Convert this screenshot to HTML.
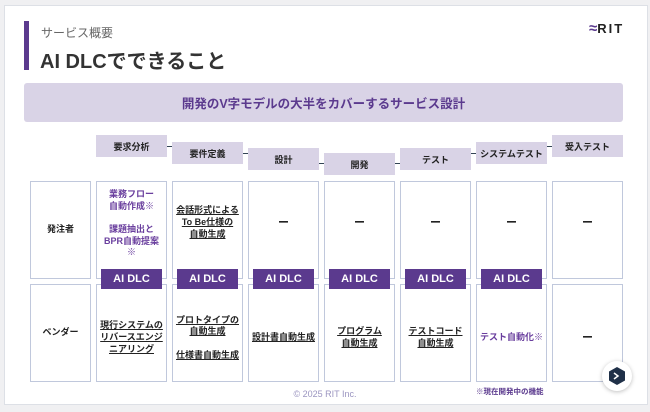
<!DOCTYPE html>
<html><head><meta charset="utf-8"><style>
*{margin:0;padding:0;box-sizing:border-box}
body{width:650px;height:412px;background:#f0f0f2;font-family:"Liberation Sans","Noto Sans CJK JP",sans-serif;position:relative;overflow:hidden;color:#222}
.slide{position:absolute;left:4px;top:5px;width:644px;height:400px;background:#fff;border:1px solid #dde0e6}
.a{position:absolute}
.bar{left:24px;top:21px;width:5px;height:49px;background:#5b3a8e}
.stage{position:absolute;background:#d9d3e6;font-size:9px;font-weight:bold;display:flex;align-items:center;justify-content:center;width:71px;height:22px}
.cell{position:absolute;border:1.5px solid #c0c8dc;background:#fff;display:flex;align-items:center;justify-content:center;text-align:center;font-size:9px;font-weight:bold;line-height:1.3}
.u{text-decoration:underline}
.p{color:#6a3f9e}
.badge{position:absolute;width:61px;height:20px;background:#5b3a8e;color:#fff;font-size:11px;font-weight:bold;display:flex;align-items:center;justify-content:center}
.arr{position:absolute;height:1px;width:5px;background:#345}
.d{font-size:11px}
</style></head><body>
<div class="slide"></div>
<div class="a bar"></div>
<div class="a" style="left:41px;top:24px;font-size:12px;color:#666">サービス概要</div>
<div class="a" style="left:40px;top:45px;font-size:20px;font-weight:bold;color:#333">AI DLCでできること</div>
<div class="a" style="left:589px;top:20px;font-size:13px;font-weight:bold;letter-spacing:2px;color:#222"><span style="color:#5b3a8e;letter-spacing:0;font-size:15px">≈</span>RIT</div>
<div class="a" style="left:24px;top:83px;width:599px;height:39px;background:#d9d3e6;border-radius:3px;display:flex;align-items:center;justify-content:center;color:#5b3a8e;font-size:12.5px;font-weight:bold">開発のV字モデルの大半をカバーするサービス設計</div>

<div class="stage" style="left:96px;top:135px">要求分析</div>
<div class="stage" style="left:172px;top:142px">要件定義</div>
<div class="stage" style="left:248px;top:148px">設計</div>
<div class="stage" style="left:324px;top:153px">開発</div>
<div class="stage" style="left:400px;top:148px">テスト</div>
<div class="stage" style="left:476px;top:142px">システムテスト</div>
<div class="stage" style="left:552px;top:135px">受入テスト</div>
<div class="arr" style="left:167px;top:146px"></div>
<div class="arr" style="left:243px;top:153px"></div>
<div class="arr" style="left:319px;top:163px"></div>
<div class="arr" style="left:395px;top:163px"></div>
<div class="arr" style="left:471px;top:153px"></div>
<div class="arr" style="left:547px;top:146px"></div>

<div class="cell" style="left:30px;top:181px;width:61px;height:98px">発注者</div>
<div class="cell p" style="left:96px;top:181px;width:71px;height:98px;padding-bottom:12px"><div>業務フロー<br>自動作成※<br><br>課題抽出と<br>BPR自動提案<br>※</div></div>
<div class="cell" style="left:172px;top:181px;width:71px;height:98px;padding-bottom:14px"><div class="u">会話形式による<br>To Be仕様の<br>自動生成</div></div>
<div class="cell d" style="left:248px;top:181px;width:71px;height:98px;padding-bottom:14px">ー</div>
<div class="cell d" style="left:324px;top:181px;width:71px;height:98px;padding-bottom:14px">ー</div>
<div class="cell d" style="left:400px;top:181px;width:71px;height:98px;padding-bottom:14px">ー</div>
<div class="cell d" style="left:476px;top:181px;width:71px;height:98px;padding-bottom:14px">ー</div>
<div class="cell d" style="left:552px;top:181px;width:71px;height:98px;padding-bottom:14px">ー</div>

<div class="cell" style="left:30px;top:284px;width:61px;height:98px">ベンダー</div>
<div class="cell" style="left:96px;top:284px;width:71px;height:98px;padding-top:10px"><div class="u">現行システムの<br>リバースエンジ<br>ニアリング</div></div>
<div class="cell" style="left:172px;top:284px;width:71px;height:98px;padding-top:10px"><div><span class="u">プロトタイプの<br>自動生成</span><br><br><span class="u">仕様書自動生成</span></div></div>
<div class="cell" style="left:248px;top:284px;width:71px;height:98px;padding-top:10px"><div class="u">設計書自動生成</div></div>
<div class="cell" style="left:324px;top:284px;width:71px;height:98px;padding-top:10px"><div class="u">プログラム<br>自動生成</div></div>
<div class="cell" style="left:400px;top:284px;width:71px;height:98px;padding-top:10px"><div class="u">テストコード<br>自動生成</div></div>
<div class="cell p" style="left:476px;top:284px;width:71px;height:98px;padding-top:10px"><div>テスト自動化※</div></div>
<div class="cell d" style="left:552px;top:284px;width:71px;height:98px;padding-top:10px">ー</div>

<div class="badge" style="left:101px;top:269px">AI DLC</div>
<div class="badge" style="left:177px;top:269px">AI DLC</div>
<div class="badge" style="left:253px;top:269px">AI DLC</div>
<div class="badge" style="left:329px;top:269px">AI DLC</div>
<div class="badge" style="left:405px;top:269px">AI DLC</div>
<div class="badge" style="left:481px;top:269px">AI DLC</div>

<div class="a" style="left:476px;top:386px;font-size:7.5px;font-weight:bold;color:#5b3a8e">※現在開発中の機能</div>
<div class="a" style="left:0;width:650px;top:389px;text-align:center;font-size:9px;color:#9b95c0">© 2025 RIT Inc.</div>
<div class="a" style="left:602px;top:361px;width:30px;height:30px;border-radius:50%;background:#fff;box-shadow:0 1px 4px rgba(0,0,0,.25);display:flex;align-items:center;justify-content:center">
<svg width="16" height="18" viewBox="0 0 16 18"><path d="M8 0L16 4.5V13.5L8 18L0 13.5V4.5Z" fill="#1f3048"/><path d="M5 6L9 9L5 12" stroke="#fff" stroke-width="1.5" fill="none"/></svg></div>
</body></html>
